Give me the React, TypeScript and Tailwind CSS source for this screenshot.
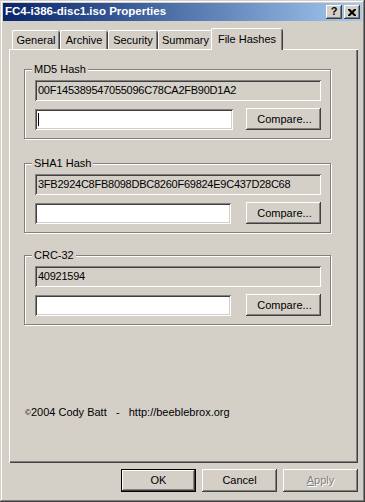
import React from "react";

const raised =
  "shadow-[inset_-1px_-1px_0_#404040,inset_1px_1px_0_#ffffff,inset_-2px_-2px_0_#808080,inset_2px_2px_0_#d4d0c8]";
const sunken =
  "shadow-[inset_1px_1px_0_#808080,inset_-1px_-1px_0_#ffffff,inset_2px_2px_0_#404040,inset_-2px_-2px_0_#d4d0c8]";

const tabs = [
  { label: "General", w: "w-[48px]" },
  { label: "Archive", w: "w-[48px]" },
  { label: "Security", w: "w-[50px]" },
  { label: "Summary", w: "w-[55px]" },
];

type HashGroupProps = {
  title: string;
  value: string;
  inputW: string;
  focused?: boolean;
  className?: string;
};

const HashGroup: React.FC<HashGroupProps> = ({ title, value, inputW, focused, className }) => (
  <div
    className={`relative w-[307px] h-[70px] border border-[#808080] shadow-[inset_1px_1px_0_#ffffff,1px_1px_0_#ffffff] pl-[10px] pt-[10px] ${className || ""}`}
  >
    <span className="absolute -top-[8px] left-[7px] bg-[#d4d0c8] px-[2px] leading-[14px]">{title}</span>
    <div className={`w-[286px] h-[21px] bg-[#d4d0c8] ${sunken} flex items-center pl-[3px] tracking-[-0.25px]`}>
      {value}
    </div>
    <div className="w-[286px] mt-[7px] flex items-center justify-between">
      <div className={`${inputW} h-[21px] bg-white ${sunken} flex items-center pl-[3px]`}>
        {focused && <span className="block w-px h-[13px] bg-black" />}
      </div>
      <button className={`w-[75px] h-[22px] bg-[#d4d0c8] ${raised} text-black pl-[2px]`}>Compare...</button>
    </div>
  </div>
);

const App: React.FC = () => {
  return (
    <div
      className={`w-[365px] h-[502px] bg-[#d4d0c8] p-[3px] flex flex-col text-[11px] text-black shadow-[inset_-1px_-1px_0_#404040,inset_1px_1px_0_#d4d0c8,inset_-2px_-2px_0_#808080,inset_2px_2px_0_#ffffff] font-['Liberation_Sans',Arial,sans-serif]`}
    >
      {/* title bar */}
      <div className="h-[18px] flex items-center justify-between pl-[2px] pr-[2px] bg-gradient-to-r from-[#0a246a] to-[#a6caf0]">
        <span className="text-white font-bold text-[11.5px] leading-none">FC4-i386-disc1.iso Properties</span>
        <div className="flex gap-[2px]">
          <button className={`w-[16px] h-[14px] bg-[#d4d0c8] ${raised} flex items-center justify-center font-bold text-[11px] leading-none pb-[1px]`}>
            ?
          </button>
          <button className={`w-[16px] h-[14px] bg-[#d4d0c8] ${raised} flex items-center justify-center`}>
            <svg width="8" height="7" viewBox="0 0 8 7">
              <path d="M0 0h2l2 2 2-2h2v1L5.5 3.5 8 6v1H6L4 5 2 7H0V6l2.5-2.5L0 1z" fill="#000" />
            </svg>
          </button>
        </div>
      </div>

      {/* tabs */}
      <div className="mt-[7px] ml-[9px] flex items-end">
        {tabs.map((t) => (
          <div
            key={t.label}
            className={`${t.w} h-[19px] rounded-t-[2px] shadow-[inset_1px_0_0_#ffffff,inset_0_1px_0_#ffffff,inset_-1px_0_0_#404040,inset_-2px_0_0_#808080] flex items-center justify-center pt-[1px]`}
          >
            {t.label}
          </div>
        ))}
        <div className="relative z-10 w-[72px] h-[22px] -ml-[2px] -mb-[1px] bg-[#d4d0c8] rounded-t-[2px] shadow-[inset_1px_0_0_#ffffff,inset_0_1px_0_#ffffff,inset_-1px_0_0_#404040,inset_-2px_0_0_#808080] flex items-start justify-center pt-[3px]">
          File Hashes
        </div>
      </div>

      {/* panel */}
      <div className="ml-[6px] mr-[4px] h-[414px] flex flex-col pl-[15px] shadow-[inset_1px_1px_0_#ffffff,inset_-1px_-1px_0_#404040,inset_-2px_-2px_0_#808080]">
        <HashGroup className="mt-[20px]" title="MD5 Hash" value="00F145389547055096C78CA2FB90D1A2" inputW="w-[198px]" focused />
        <HashGroup className="mt-[24px]" title="SHA1 Hash" value="3FB2924C8FB8098DBC8260F69824E9C437D28C68" inputW="w-[196px]" />
        <HashGroup className="mt-[22px]" title="CRC-32" value="40921594" inputW="w-[196px]" />
        <p className="mt-[81px] pl-[1px] leading-[13px] whitespace-pre">
          <span className="text-[8px] align-top">©</span>2004 Cody Batt   -   http://beeblebrox.org
        </p>
      </div>

      {/* buttons */}
      <div className="mt-[6px] mr-[4px] flex justify-end gap-[6px]">
        <button className="w-[75px] h-[23px] border border-black bg-[#d4d0c8] shadow-[inset_-1px_-1px_0_#404040,inset_1px_1px_0_#ffffff,inset_-2px_-2px_0_#808080]">
          OK
        </button>
        <button className={`w-[75px] h-[23px] bg-[#d4d0c8] ${raised}`}>Cancel</button>
        <button className={`w-[75px] h-[23px] bg-[#d4d0c8] ${raised} text-[#808080] [text-shadow:1px_1px_0_#ffffff]`}>
          <span className="underline">A</span>pply
        </button>
      </div>
    </div>
  );
};

export default App;
